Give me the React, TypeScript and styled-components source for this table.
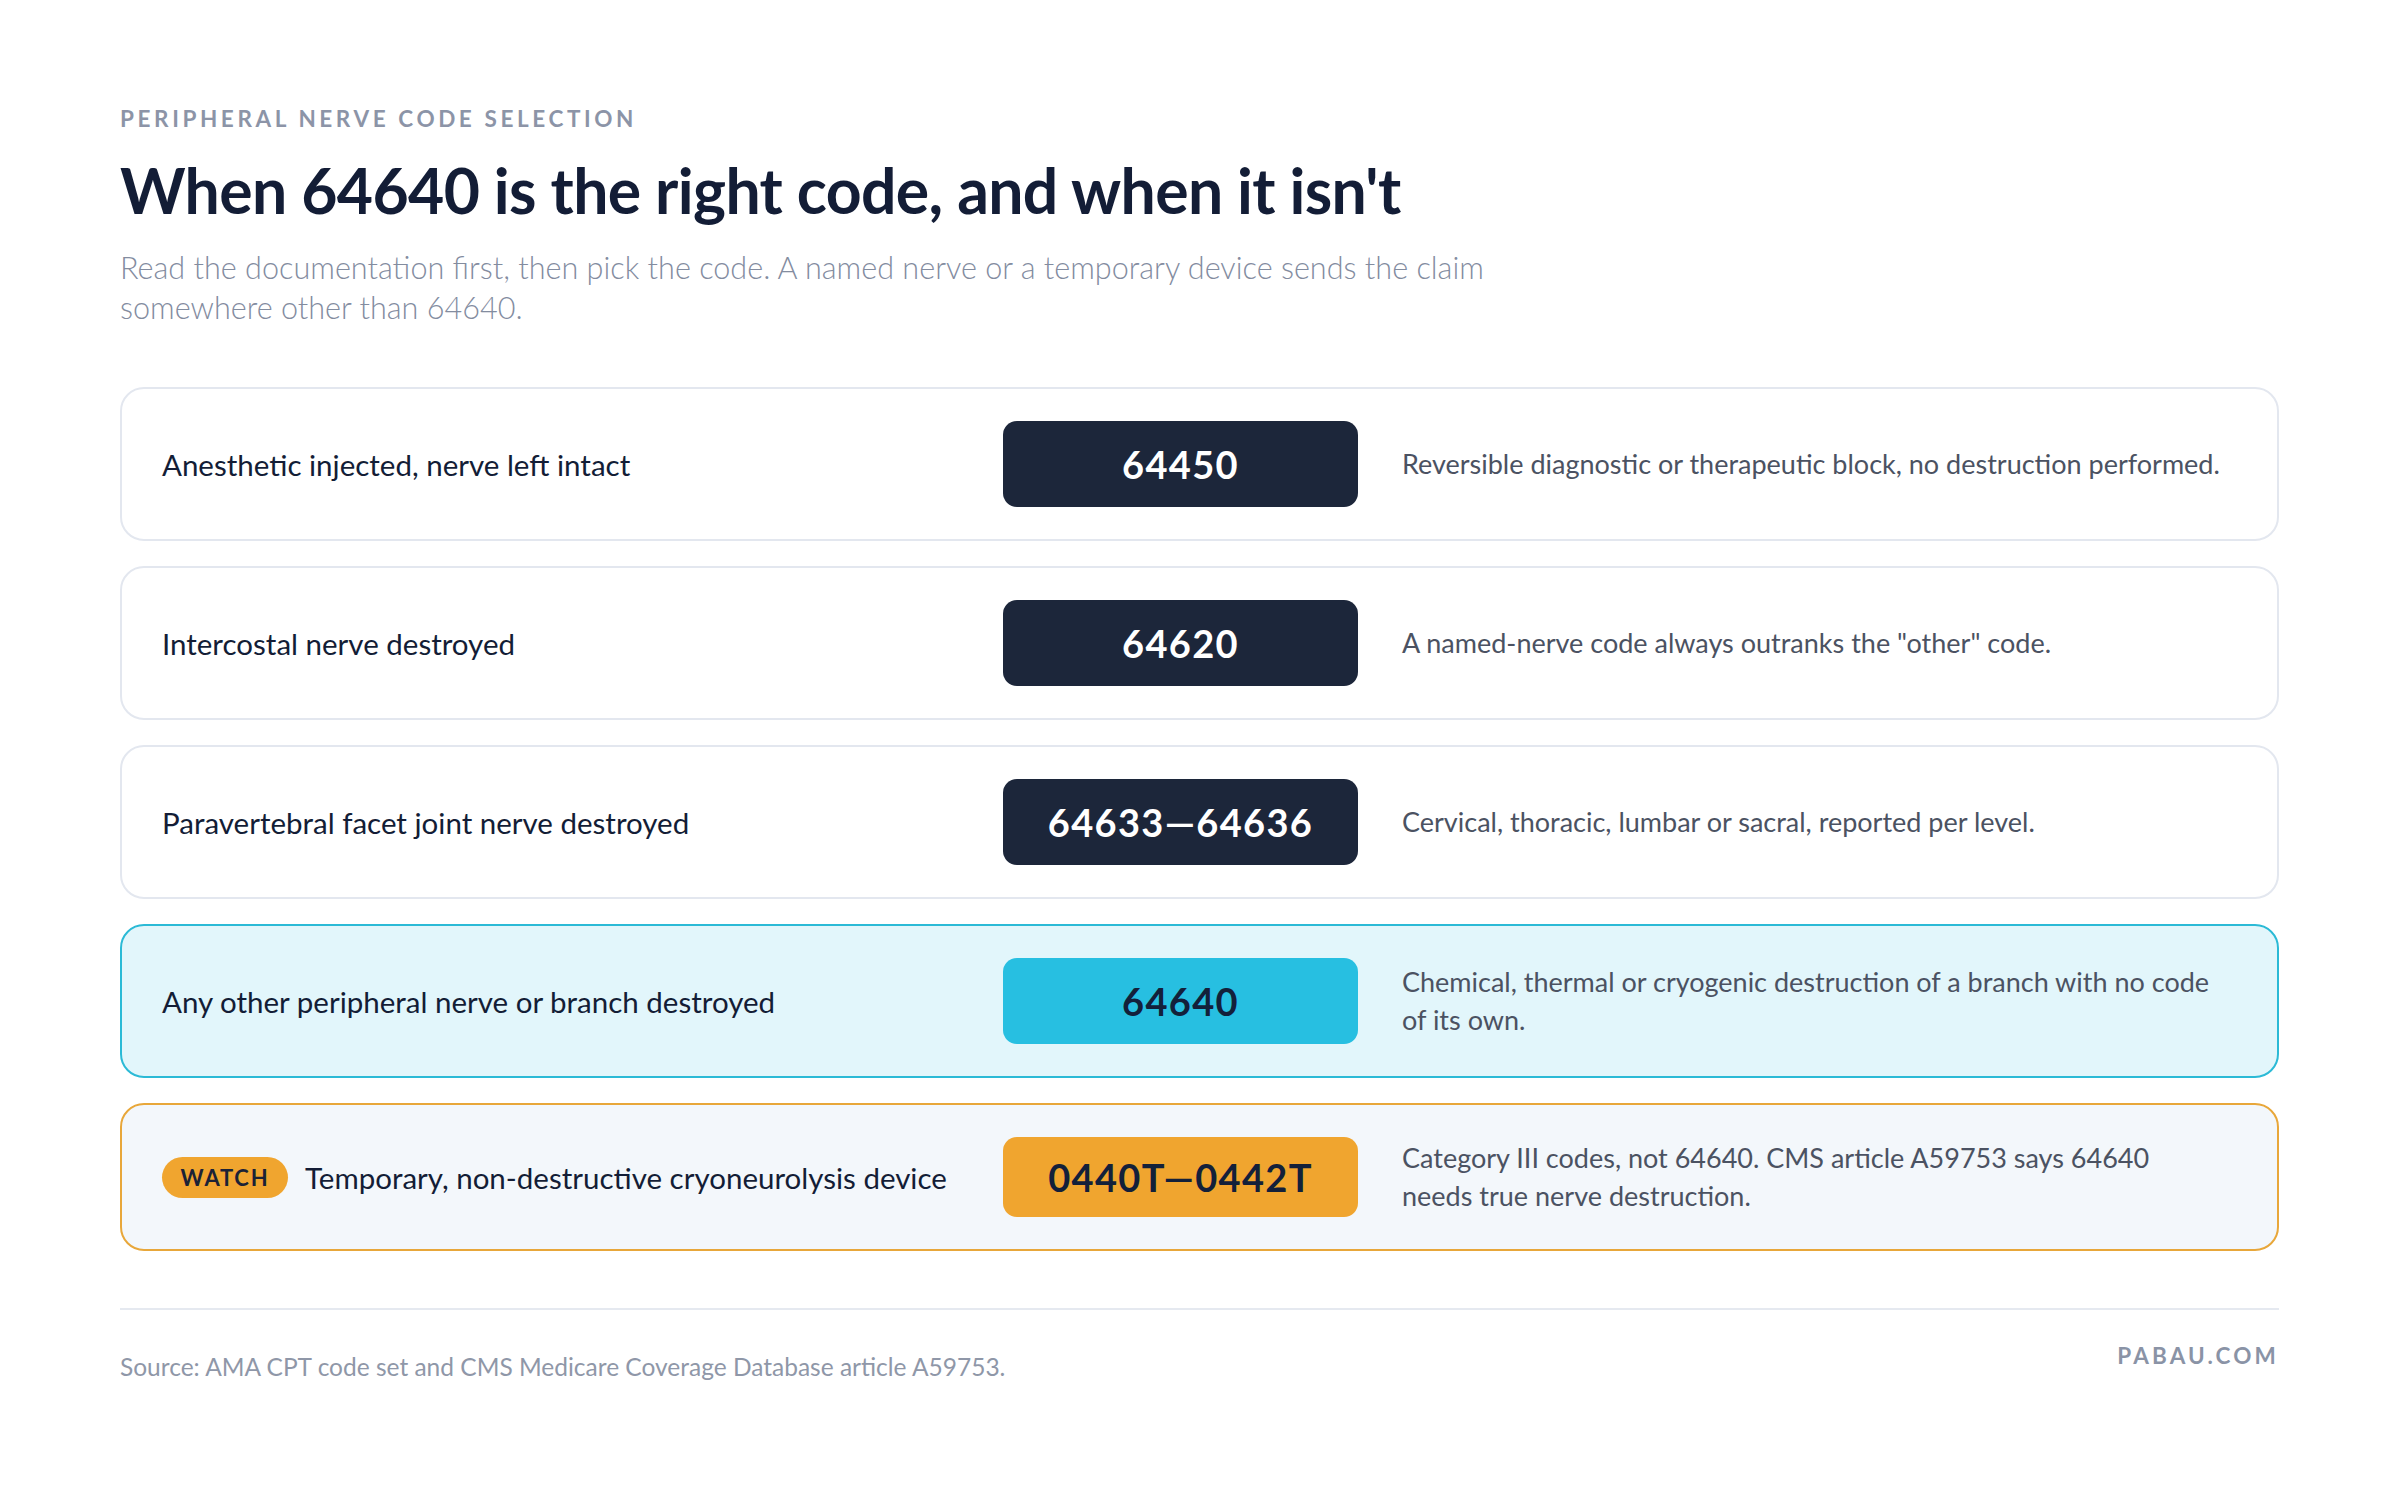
import * as React from 'react';
import styled, { createGlobalStyle } from 'styled-components';

type Tone = 'plain' | 'accent' | 'watch';

interface CodeRow {
  label: string;
  code: string;
  note: string;
  tone: Tone;
  watch?: boolean;
}

const rows: CodeRow[] = [
  {
    label: 'Anesthetic injected, nerve left intact',
    code: '64450',
    note: 'Reversible diagnostic or therapeutic block, no destruction performed.',
    tone: 'plain',
  },
  {
    label: 'Intercostal nerve destroyed',
    code: '64620',
    note: 'A named-nerve code always outranks the "other" code.',
    tone: 'plain',
  },
  {
    label: 'Paravertebral facet joint nerve destroyed',
    code: '64633—64636',
    note: 'Cervical, thoracic, lumbar or sacral, reported per level.',
    tone: 'plain',
  },
  {
    label: 'Any other peripheral nerve or branch destroyed',
    code: '64640',
    note: 'Chemical, thermal or cryogenic destruction of a branch with no code of its own.',
    tone: 'accent',
  },
  {
    label: 'Temporary, non-destructive cryoneurolysis device',
    code: '0440T—0442T',
    note: 'Category III codes, not 64640. CMS article A59753 says 64640 needs true nerve destruction.',
    tone: 'watch',
    watch: true,
  },
];

const rowBg: Record<Tone, string> = {
  plain: '#ffffff',
  accent: '#e2f6fb',
  watch: '#f3f7fb',
};
const rowBorder: Record<Tone, string> = {
  plain: '#e3e7ef',
  accent: '#2bbad6',
  watch: '#e8a73a',
};
const badgeBg: Record<Tone, string> = {
  plain: '#1c263a',
  accent: '#27bfe1',
  watch: '#f0a52f',
};
const badgeInk: Record<Tone, string> = {
  plain: '#ffffff',
  accent: '#13203a',
  watch: '#13203a',
};

const GlobalStyle = createGlobalStyle`
  html, body {
    margin: 0;
    padding: 0;
    background: #ffffff;
  }
  body {
    font-family: Lato, "Open Sans", "Liberation Sans", sans-serif;
    -webkit-font-smoothing: antialiased;
  }
`;

const Page = styled.div`
  box-sizing: border-box;
  width: 2400px;
  height: 1506px;
  padding: 104px 121px 0 120px;
`;

const Eyebrow = styled.div`
  font-size: 22.5px;
  font-weight: 700;
  letter-spacing: 0.16em;
  color: #8c94a7;
  line-height: 30px;
`;

const Title = styled.h1`
  margin: 20px 0 0;
  font-size: 62.5px;
  font-weight: 700;
  letter-spacing: -0.01em;
  line-height: 72px;
  color: #131d36;
`;

const Lede = styled.p`
  margin: 22px 0 0;
  max-width: 1420px;
  font-size: 30.6px;
  font-weight: 300;
  line-height: 40px;
  color: #838c9f;
`;

const List = styled.div`
  margin-top: 59px;
  display: flex;
  flex-direction: column;
  gap: 25px;
`;

const Row = styled.div<{ $tone: Tone }>`
  box-sizing: border-box;
  display: grid;
  grid-template-columns: 797px 355px 1fr;
  column-gap: 44px;
  align-items: center;
  padding: 32px 40px;
  border: 2px solid ${p => rowBorder[p.$tone]};
  border-radius: 24px;
  background: ${p => rowBg[p.$tone]};
`;

const Label = styled.div`
  display: flex;
  align-items: center;
  gap: 17px;
  font-size: 29.5px;
  font-weight: 400;
  color: #131d36;
`;

const Watch = styled.span`
  display: inline-flex;
  align-items: center;
  justify-content: center;
  width: 126px;
  height: 41px;
  border-radius: 21px;
  background: #f0a52f;
  color: #1b2236;
  font-size: 22px;
  font-weight: 700;
  letter-spacing: 0.08em;
`;

const Badge = styled.div<{ $tone: Tone }>`
  height: ${p => (p.$tone === 'watch' ? 80 : 86)}px;
  display: flex;
  align-items: center;
  justify-content: center;
  border-radius: 14px;
  background: ${p => badgeBg[p.$tone]};
  color: ${p => badgeInk[p.$tone]};
  font-size: 38px;
  font-weight: 700;
  letter-spacing: 0.035em;
`;

const Note = styled.div`
  max-width: 820px;
  font-size: 27px;
  line-height: 38px;
  color: #4b5262;
`;

const Footer = styled.div`
  margin-top: 57px;
  border-top: 2px solid #e5e9f0;
  padding-top: 30px;
  display: flex;
  justify-content: space-between;
  align-items: flex-start;
`;

const Source = styled.div`
  margin-top: 12px;
  font-size: 24.5px;
  line-height: 30px;
  color: #8f97a8;
`;

const Brand = styled.div`
  font-size: 22.5px;
  line-height: 32px;
  font-weight: 700;
  letter-spacing: 0.14em;
  color: #8a93a6;
`;

export default function App() {
  return (
    <>
      <GlobalStyle />
      <Page>
        <Eyebrow>PERIPHERAL NERVE CODE SELECTION</Eyebrow>
        <Title>When 64640 is the right code, and when it isn't</Title>
        <Lede>
          Read the documentation first, then pick the code. A named nerve or a temporary device sends the claim
          somewhere other than 64640.
        </Lede>
        <List>
          {rows.map(row => (
            <Row key={row.code} $tone={row.tone}>
              <Label>
                {row.watch && <Watch>WATCH</Watch>}
                <span>{row.label}</span>
              </Label>
              <Badge $tone={row.tone}>{row.code}</Badge>
              <Note>{row.note}</Note>
            </Row>
          ))}
        </List>
        <Footer>
          <Source>Source: AMA CPT code set and CMS Medicare Coverage Database article A59753.</Source>
          <Brand>PABAU.COM</Brand>
        </Footer>
      </Page>
    </>
  );
}
